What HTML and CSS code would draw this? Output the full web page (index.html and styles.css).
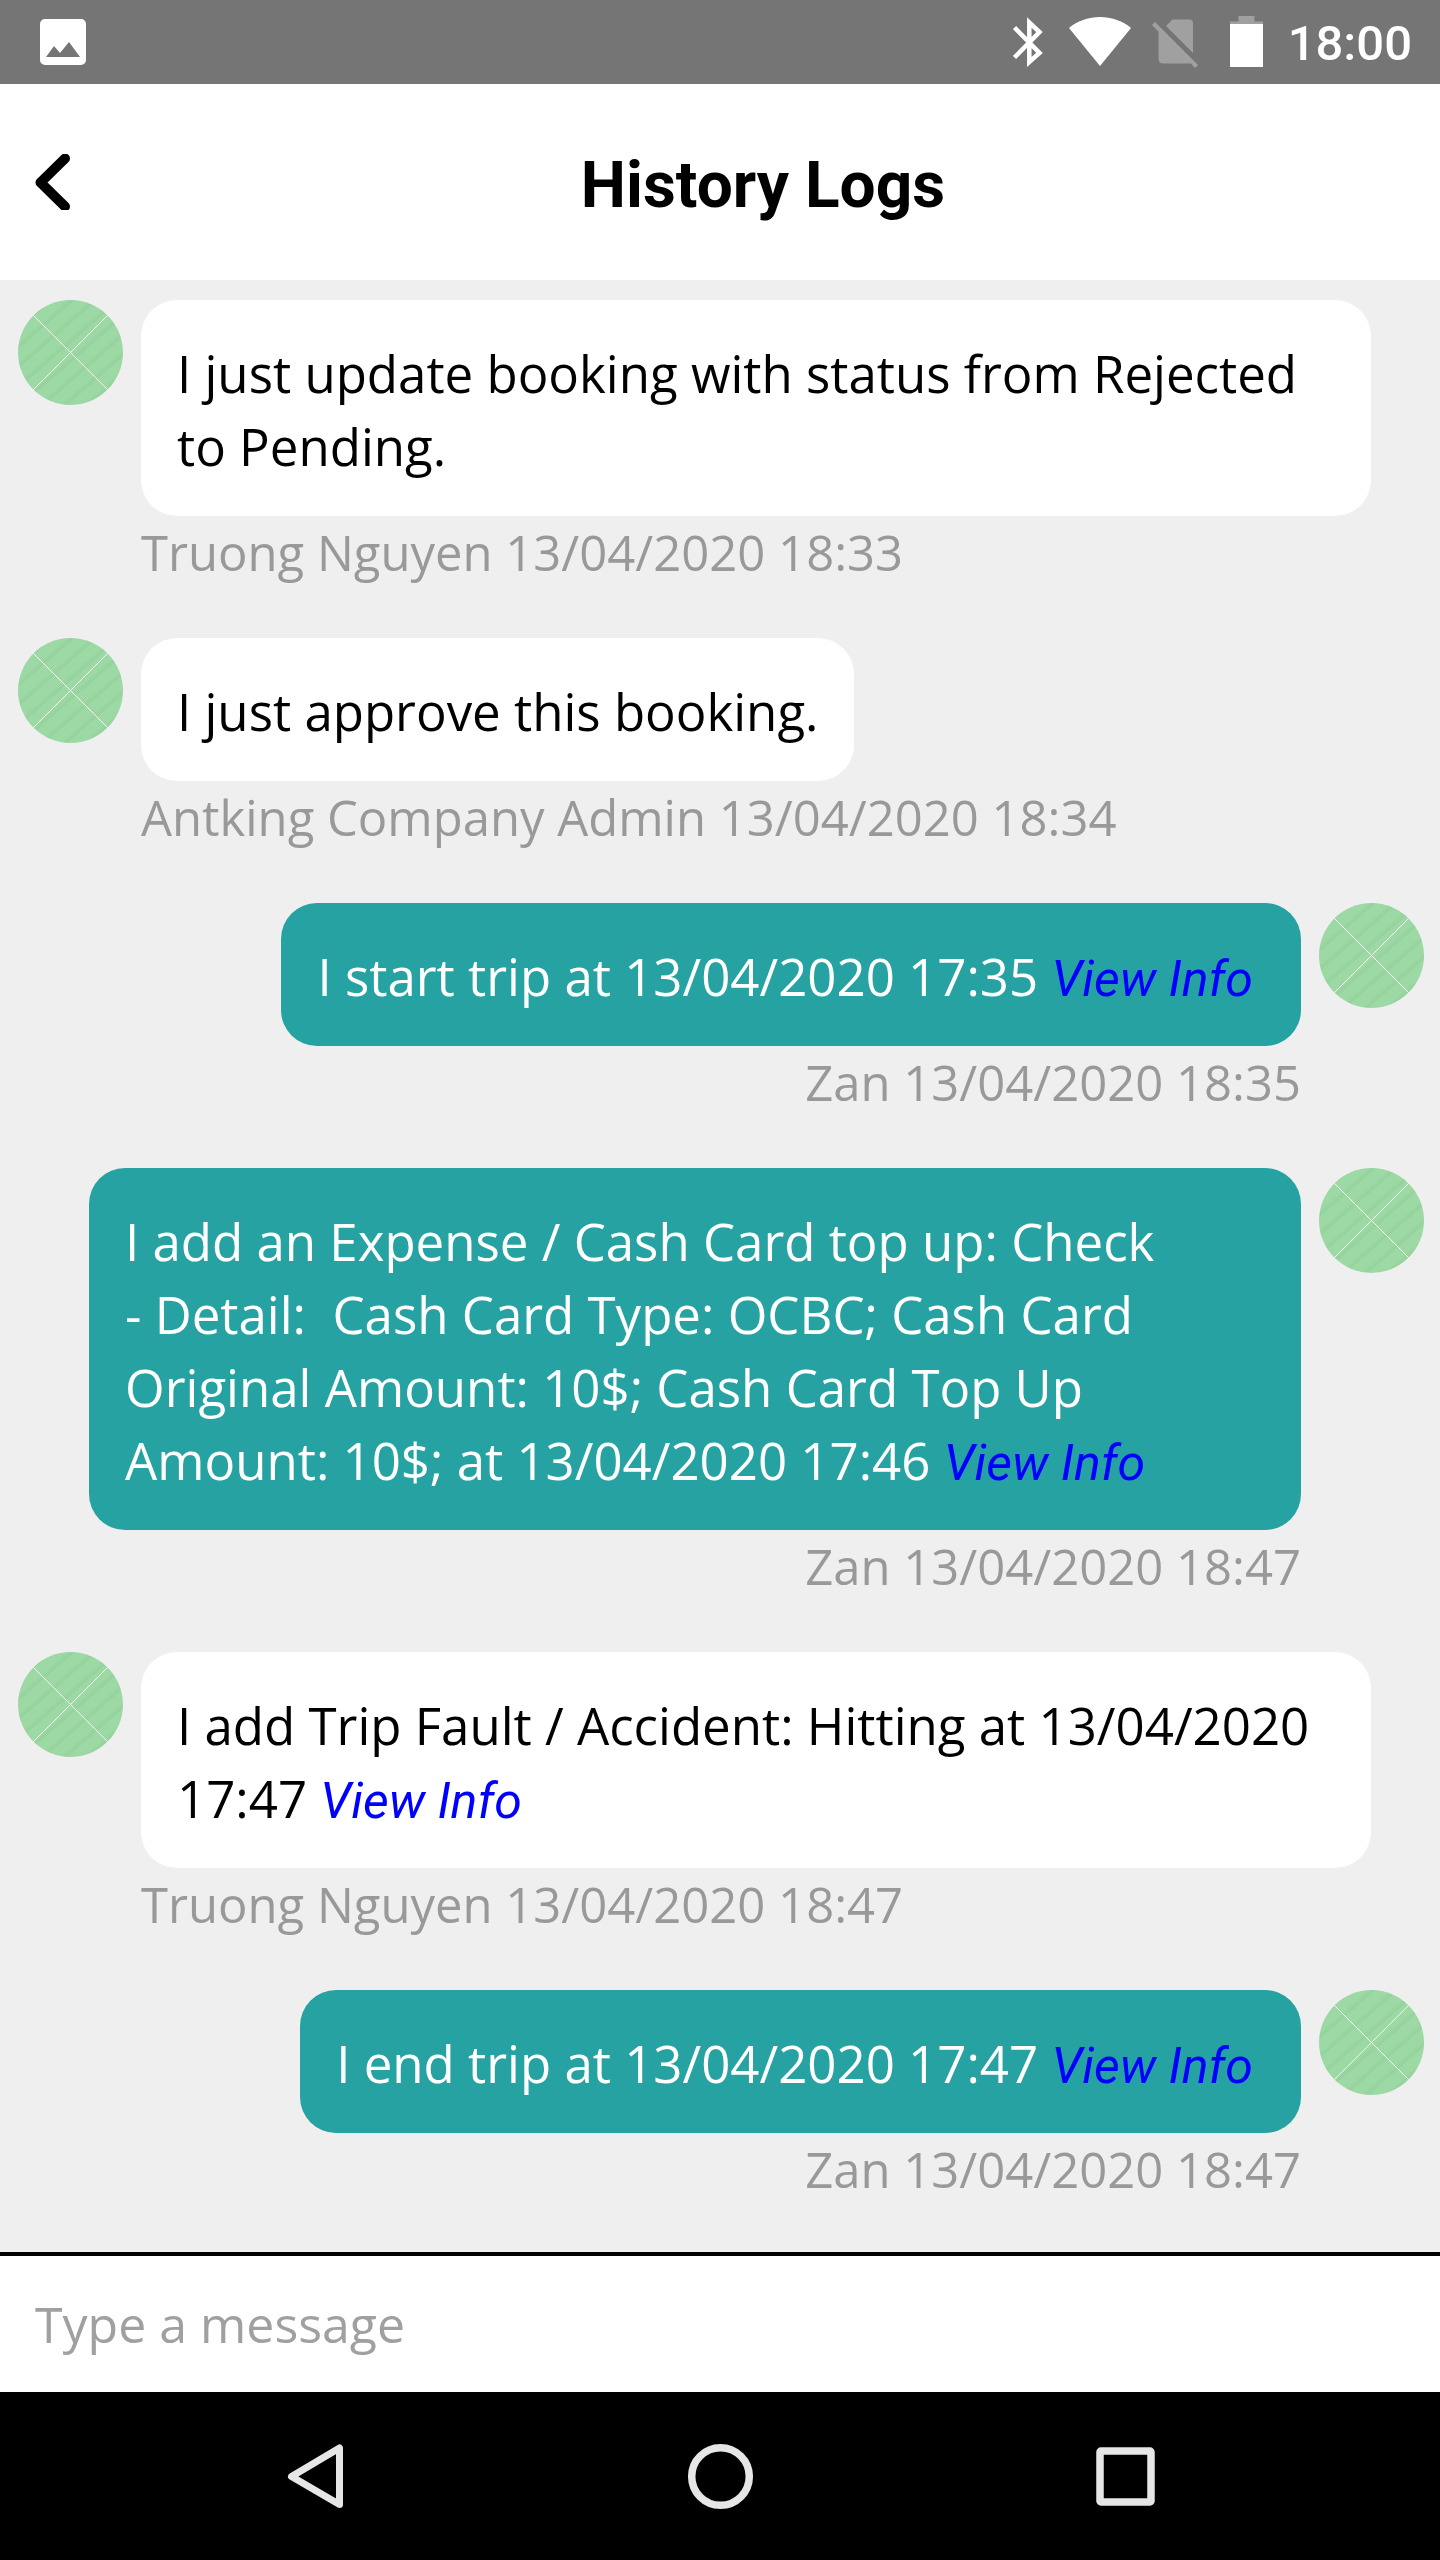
FILE: index.html
```html
<!DOCTYPE html>
<html lang="en">
<head>
<meta charset="utf-8">
<meta name="viewport" content="width=device-width, initial-scale=1">
<title>History Logs</title>
<link rel="stylesheet" href="styles.css">
</head>
<body>
<svg class="defs" width="0" height="0" aria-hidden="true">
  <defs>
    <pattern id="stripes" width="15" height="15" patternUnits="userSpaceOnUse" patternTransform="rotate(-41)">
      <rect width="15" height="15" fill="#9dd9a4"/>
      <rect y="3" width="15" height="5" fill="#99d6a0"/>
      <rect y="5" width="15" height="2" fill="#96d29d"/>
    </pattern>
    <clipPath id="round"><circle cx="53" cy="53" r="53"/></clipPath>
    <symbol id="avatar" viewBox="0 0 106 106">
      <g clip-path="url(#round)">
        <rect width="106" height="106" fill="url(#stripes)"/>
        <path d="M0 0L106 106M106 0L0 106" stroke="#f4fbf4" stroke-width="1" fill="none"/>
      </g>
    </symbol>
  </defs>
</svg>
<div class="screen">
  <div class="status">
    <svg width="46" height="46" viewBox="0 0 46 46" aria-hidden="true"><path fill="#fff" fill-rule="evenodd" d="M5 0H41a5 5 0 0 1 5 5V41a5 5 0 0 1-5 5H5a5 5 0 0 1-5-5V5a5 5 0 0 1 5-5ZM6 38H40L29 23L20 34L14 27Z"/></svg>
    <div class="status-right">
      <svg width="36" height="84" viewBox="0 0 36 84" aria-hidden="true"><path fill="none" stroke="#fff" stroke-width="4.500" d="M1.500 27.500L26.500 53L16.300 62V22.500L26.500 32L1.500 57.500"/></svg>
      <svg width="62" height="84" viewBox="0 0 62 84" aria-hidden="true"><path fill="#fff" d="M31 66L0 28C9 20.500 20 17 31 17S53 20.500 62 28Z"/></svg>
      <svg width="59" height="84" viewBox="0 0 59 84" aria-hidden="true"><g fill="#a0a0a0"><path d="M15 26L21.500 19.500H38a4 4 0 0 1 4 4V53Z"/><path d="M4 22L47 65L44 68L40 63.500H12a4.500 4.500 0 0 1-4.500-4.500V31.500L1 25Z"/></g></svg>
      <svg width="38" height="84" viewBox="0 0 38 84" aria-hidden="true"><path fill="#a0a0a0" d="M8.500 16h16v5.500H33V24H0V21.500H8.500Z"/><path fill="#fff" d="M0 24H33V67H0Z"/></svg>
      <time class="clock">18:00</time>
    </div>
  </div>
  <header class="header">
    <button class="back" type="button" aria-label="Back">
      <svg width="35" height="56" viewBox="0 0 35 56" aria-hidden="true"><path fill="none" stroke="#000" stroke-width="10" stroke-linecap="round" stroke-linejoin="round" d="M30 4.500L5.500 28.500L30 52.500"/></svg>
    </button>
    <h1 class="title">History Logs</h1>
  </header>
  <main class="log">
    <article class="entry">
      <svg class="avatar" aria-hidden="true"><use href="#avatar"/></svg>
      <div class="content">
        <p class="bubble fill">I just update booking with status from Rejected<br>to Pending.</p>
        <p class="meta">Truong Nguyen 13/04/2020 18:33</p>
      </div>
    </article>
    <article class="entry">
      <svg class="avatar" aria-hidden="true"><use href="#avatar"/></svg>
      <div class="content">
        <p class="bubble">I just approve this booking.</p>
        <p class="meta">Antking Company Admin 13/04/2020 18:34</p>
      </div>
    </article>
    <article class="entry own">
      <svg class="avatar" aria-hidden="true"><use href="#avatar"/></svg>
      <div class="content">
        <p class="bubble">I start trip at 13/04/2020 17:35 <a href="#info">View Info</a></p>
        <p class="meta">Zan 13/04/2020 18:35</p>
      </div>
    </article>
    <article class="entry own">
      <svg class="avatar" aria-hidden="true"><use href="#avatar"/></svg>
      <div class="content">
        <p class="bubble fill">I add an Expense / Cash Card top up: Check<br>- Detail:&nbsp; Cash Card Type: OCBC; Cash Card<br>Original Amount: 10$; Cash Card Top Up<br>Amount: 10$; at 13/04/2020 17:46 <a href="#info">View Info</a></p>
        <p class="meta">Zan 13/04/2020 18:47</p>
      </div>
    </article>
    <article class="entry">
      <svg class="avatar" aria-hidden="true"><use href="#avatar"/></svg>
      <div class="content">
        <p class="bubble fill">I add Trip Fault / Accident: Hitting at 13/04/2020<br>17:47 <a href="#info">View Info</a></p>
        <p class="meta">Truong Nguyen 13/04/2020 18:47</p>
      </div>
    </article>
    <article class="entry own">
      <svg class="avatar" aria-hidden="true"><use href="#avatar"/></svg>
      <div class="content">
        <p class="bubble">I end trip at 13/04/2020 17:47 <a href="#info">View Info</a></p>
        <p class="meta">Zan 13/04/2020 18:47</p>
      </div>
    </article>
  </main>
  <form class="composer">
    <input class="message" type="text" placeholder="Type a message" aria-label="Type a message">
  </form>
  <nav class="keys">
    <button type="button" aria-label="Back"><svg width="72" height="72" viewBox="0 0 72 72" aria-hidden="true"><path fill="none" stroke="#e6e6e6" stroke-width="7" stroke-linejoin="round" d="M60.500 8V64.500L12.500 36.500Z"/></svg></button>
    <button type="button" aria-label="Home"><svg width="72" height="72" viewBox="0 0 72 72" aria-hidden="true"><circle cx="36.500" cy="36.500" r="28.800" fill="none" stroke="#e6e6e6" stroke-width="7.500"/></svg></button>
    <button type="button" aria-label="Recent apps"><svg width="72" height="72" viewBox="0 0 72 72" aria-hidden="true"><rect x="11" y="11" width="51" height="51" rx="1" fill="none" stroke="#e6e6e6" stroke-width="7.500" stroke-linejoin="round"/></svg></button>
  </nav>
</div>
</body>
</html>
```
FILE: styles.css
```css
* { box-sizing: border-box; }
body {
  margin: 0;
  background: #efefef;
  color: #000;
  font-family: "Open Sans", sans-serif;
}
.defs { position: absolute; }
.screen {
  display: flex;
  flex-direction: column;
  min-height: 100vh;
}
svg { display: block; flex: none; }
p, h1 { margin: 0; }
button {
  padding: 0;
  border: 0;
  background: none;
}

.status {
  display: flex;
  align-items: center;
  justify-content: space-between;
  height: 84px;
  padding: 0 28px 0 40px;
  background: #757575;
}
.status-right {
  display: flex;
  align-items: center;
  gap: 20px;
}
.clock {
  padding-top: 3px;
  color: #fff;
  font: 500 49px/81px Roboto, sans-serif;
}

.header {
  display: flex;
  align-items: center;
  gap: 16px;
  height: 196px;
  padding-left: 35px;
  background: #fff;
}
.title {
  flex: 1;
  padding-top: 8px;
  text-align: center;
  font: 700 64px/76px Roboto, sans-serif;
}

.log {
  display: flex;
  flex: 1;
  flex-direction: column;
  gap: 50px;
  padding: 20px 16px 44px 18px;
}
.entry {
  display: flex;
  gap: 18px;
}
.own { flex-direction: row-reverse; }
.avatar {
  width: 105px;
  height: 105px;
}
.content {
  display: flex;
  flex: 1;
  flex-direction: column;
  align-items: flex-start;
  padding-right: 53px;
}
.own .content {
  align-items: flex-end;
  padding: 0 0 0 71px;
}
.bubble {
  padding: 37px 36px 33px;
  border-radius: 36px;
  background: #fff;
  font-size: 51px;
  line-height: 73px;
}
.own .bubble {
  padding-right: 48px;
  background: #25a2a1;
  color: #fff;
}
.fill { align-self: stretch; }
.bubble a {
  color: #00f;
  font: italic 400 50px/50px Roboto, sans-serif;
  text-decoration: none;
}
.meta {
  color: #999;
  font-size: 49px;
  line-height: 72px;
}

.composer {
  border-top: 4px solid #000;
  background: #fff;
}
.message {
  display: block;
  width: 100%;
  height: 136px;
  padding: 0 35px;
  border: 0;
  background: none;
  color: #000;
  font: 50px "Open Sans", sans-serif;
}
.message::placeholder { color: #a0a0a0; opacity: 1; }

.keys {
  display: flex;
  justify-content: center;
  height: 168px;
  background: #000;
}
.keys button {
  display: flex;
  align-items: center;
  justify-content: center;
  flex: 0 1 405px;
}
```
